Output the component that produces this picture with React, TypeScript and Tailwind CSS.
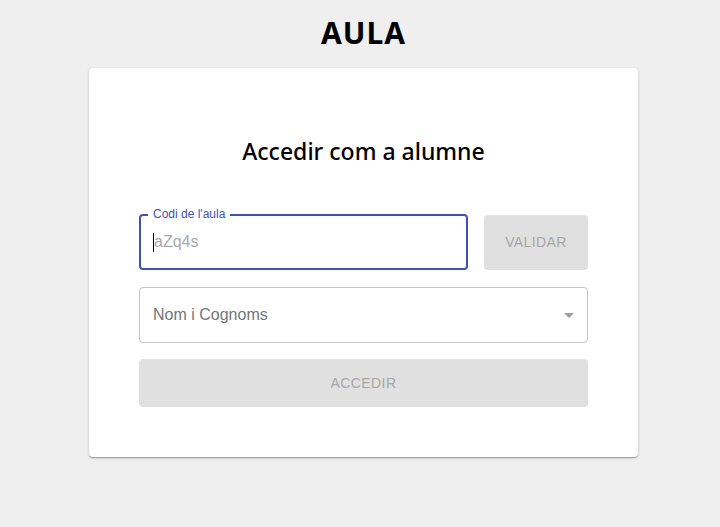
export default function App() {
  return (
    <div className="min-h-[527px] w-full bg-[#efefef] flex flex-col items-center pl-[7px] pt-[14px]" style={{ fontFamily: '"Liberation Sans", Arial, sans-serif' }}>
      <h1 className="text-[30px] leading-[38px] font-bold text-black tracking-[1px]" style={{ fontFamily: '"Noto Sans", "Open Sans", sans-serif' }}>AULA</h1>
      <div className="mt-[16px] w-[549px] bg-white rounded-[4px] shadow-[0_1px_3px_rgba(0,0,0,0.2),0_1px_1px_rgba(0,0,0,0.14),0_2px_1px_-1px_rgba(0,0,0,0.12)] px-[50px] pt-[67px] pb-[50px] flex flex-col">
        <h2 className="text-center text-[23px] leading-[32px] font-medium text-black" style={{ fontFamily: '"Noto Sans", "Open Sans", sans-serif' }}>Accedir com a alumne</h2>
        <div className="mt-[47px] flex gap-[16px]">
          <div className="relative flex-1 h-[56px] border-2 border-[#3f51b5] rounded-[4px] flex items-center px-[12px]">
            <span className="absolute left-[7px] top-[-9px] bg-white px-[5px] text-[12px] leading-[14px] text-[#3f51b5]">Codi de l'aula</span>
            <span className="w-px h-[19px] bg-black"></span>
            <span className="text-[16px] text-[#a9a9a9] pb-[1px]">aZq4s</span>
          </div>
          <div className="w-[104px] h-[55px] mt-px bg-[#e0e0e0] rounded-[4px] flex items-center justify-center text-[14px] text-[#a6a6a6] tracking-[0.4px]">VALIDAR</div>
        </div>
        <div className="mt-[17px] h-[56px] border border-[#c4c4c4] rounded-[4px] flex items-center justify-between pl-[13px] pr-[13px]">
          <span className="text-[16px] text-[#757575]">Nom i Cognoms</span>
          <svg width="10" height="5" viewBox="0 0 10 5"><path d="M0 0 L10 0 L5 5 Z" fill="#9e9e9e" /></svg>
        </div>
        <div className="mt-[16px] h-[48px] bg-[#e0e0e0] rounded-[4px] flex items-center justify-center text-[14px] text-[#a6a6a6] tracking-[0.4px]">ACCEDIR</div>
      </div>
    </div>
  );
}
